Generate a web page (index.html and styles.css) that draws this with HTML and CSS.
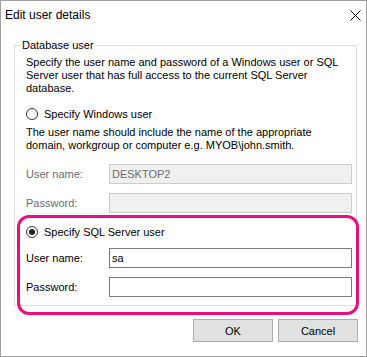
FILE: index.html
```html
<!DOCTYPE html>
<html>
<head>
    <meta name="viewport" content="width=device-width, initial-scale=1.0">
    <title>Edit user details</title>
    <link rel="stylesheet" href="styles.css">
</head>
<body>
    <div class="dialog">
        <div class="title-bar">
            <span class="title">Edit user details</span>
            <svg class="close-icon" width="11" height="11" viewBox="0 0 11 11">
                <path d="M0.5 0.5 L10.5 10.5 M10.5 0.5 L0.5 10.5" stroke="#000" stroke-width="1" fill="none"/>
            </svg>
        </div>

        <fieldset class="group-box">
            <legend>Database user</legend>
            <p class="desc">Specify the user name and password of a Windows user or SQL Server user that has full access to the current SQL Server database.</p>

            <div class="radio-row">
                <span class="radio"></span>
                <span>Specify Windows user</span>
            </div>
            <p class="desc desc-small">The user name should include the name of the appropriate domain, workgroup or computer e.g. MYOB\john.smith.</p>

            <div class="field-row first-field disabled">
                <label>User name:</label>
                <div class="text-box">DESKTOP2</div>
            </div>
            <div class="field-row disabled">
                <label>Password:</label>
                <div class="text-box"></div>
            </div>

            <div class="radio-row sql-radio">
                <span class="radio checked"></span>
                <span>Specify SQL Server user</span>
            </div>
            <div class="field-row first-sql">
                <label>User name:</label>
                <div class="text-box">sa</div>
            </div>
            <div class="field-row">
                <label>Password:</label>
                <div class="text-box"></div>
            </div>
        </fieldset>

        <div class="button-group">
            <button class="btn">OK</button>
            <button class="btn">Cancel</button>
        </div>

        <!-- highlight round the SQL user section -->
        <div class="highlight"></div>
    </div>
</body>
</html>
```

FILE: styles.css
```css
* {
    box-sizing: border-box;
    margin: 0;
    padding: 0;
}

body {
    font-family: "Liberation Sans", Arial, sans-serif;
    font-size: 11px;
    color: #000;
    background-color: #fff;
}

.dialog {
    position: relative;
    width: 367px;
    height: 357px;
    border: 1px solid #a0a0a0;
    background-color: #fff;
}

.title-bar {
    display: flex;
    align-items: center;
    justify-content: space-between;
    height: 28px;
    padding: 0 5px 0 4px;
}

.title {
    font-size: 12px;
}

.close-icon {
    display: block;
}

.group-box {
    margin: 10px 9px 0 13px;
    border: 1px solid #dcdcdc;
    padding: 4px 4px 8px 11px;
}

.group-box legend {
    line-height: 13px;
    padding: 0 2px;
    margin-left: -6px;
}

.desc {
    line-height: 13px;
}

.desc-small {
    margin-top: 4px;
}

.radio-row {
    display: flex;
    align-items: center;
    gap: 6px;
    height: 16px;
    margin-top: 11px;
}

.radio {
    position: relative;
    width: 12px;
    height: 12px;
    border: 1px solid #333;
    border-radius: 50%;
    background-color: #fff;
}

.radio.checked::after {
    content: "";
    position: absolute;
    left: 2px;
    top: 2px;
    width: 6px;
    height: 6px;
    border-radius: 50%;
    background-color: #222;
}

.field-row {
    display: grid;
    grid-template-columns: 83px 243px;
    align-items: center;
    margin-top: 9px;
}

.first-field {
    margin-top: 12px;
}

.first-sql {
    margin-top: 8px;
}

.text-box {
    height: 20px;
    line-height: 18px;
    padding-left: 2px;
    border: 1px solid #7a7a7a;
    background-color: #fff;
}

.disabled label {
    color: #6d6d6d;
}

.disabled .text-box {
    border-color: #cccccc;
    background-color: #f0f0f0;
    color: #6d6d6d;
}

.button-group {
    display: flex;
    justify-content: flex-end;
    gap: 5px;
    margin-top: 13px;
    padding-right: 8px;
}

.btn {
    width: 80px;
    height: 23px;
    border: 1px solid #adadad;
    background-color: #e1e1e1;
    font-family: "Liberation Sans", Arial, sans-serif;
    font-size: 11px;
    color: #000;
}

.highlight {
    position: absolute;
    left: 16px;
    top: 214px;
    width: 342px;
    height: 100px;
    border: 3px solid #e8107c;
    border-radius: 12px;
    pointer-events: none;
}
```
